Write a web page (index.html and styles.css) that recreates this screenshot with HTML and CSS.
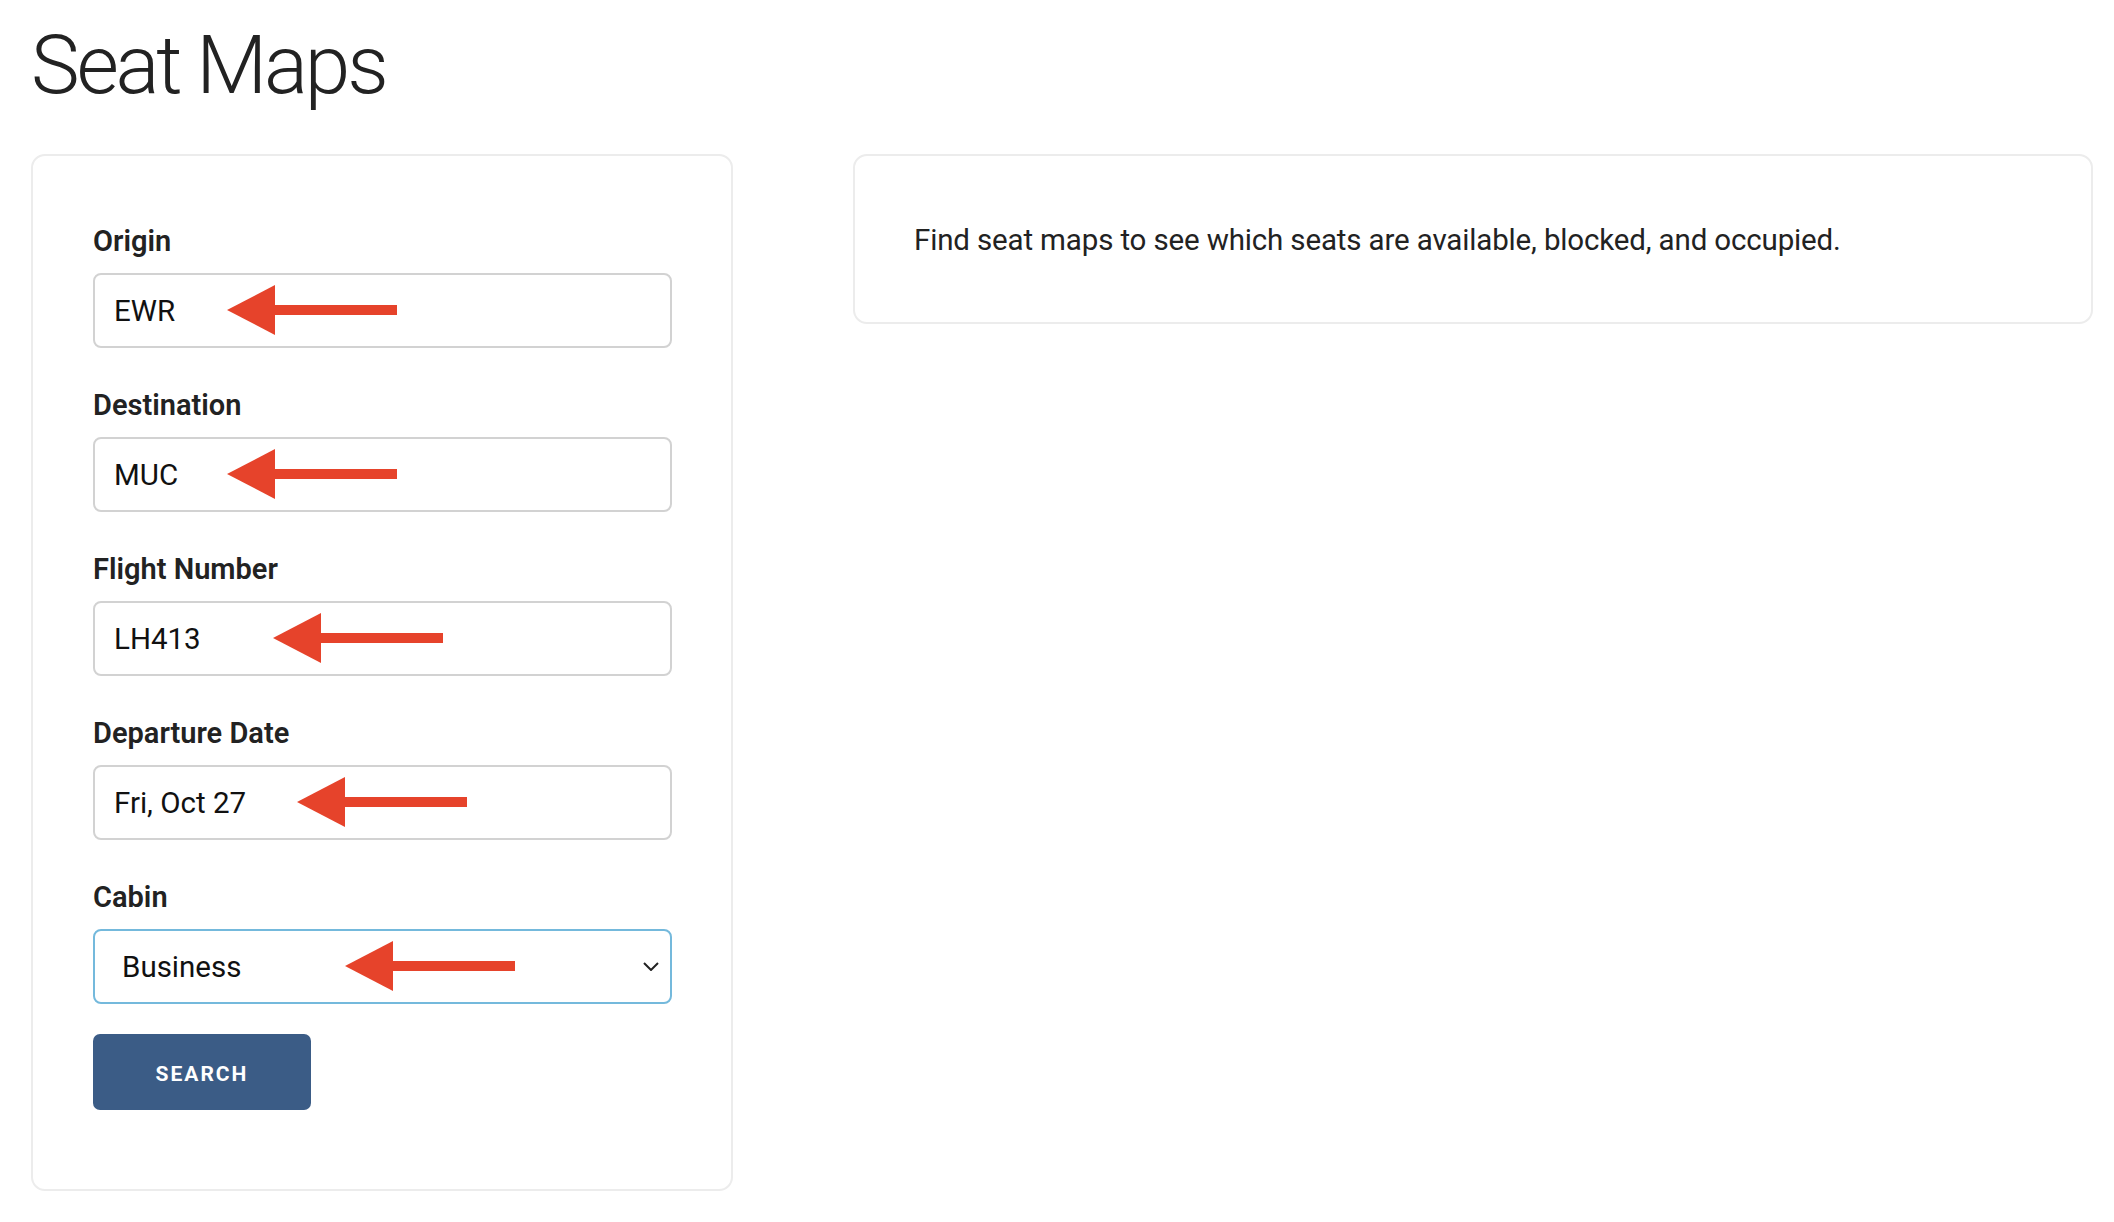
FILE: index.html
```html
<!DOCTYPE html>
<html>
<head>
    <meta charset="utf-8">
    <title>Seat Maps</title>
    <link rel="stylesheet" href="styles.css">
</head>
<body>
    <div class="page">
        <h1 class="page-title">Seat Maps</h1>
        <div class="layout">
            <form class="card search-card">
                <div class="field">
                    <label class="field-label" for="origin">Origin</label>
                    <div class="field-box">
                        <input class="field-input" id="origin" type="text" value="EWR">
                        <svg class="arrow" style="left: 134px" viewBox="0 0 170 50"><polygon points="0,25 48,0 48,50"/><rect x="44" y="20" width="126" height="10"/></svg>
                    </div>
                </div>
                <div class="field">
                    <label class="field-label" for="destination">Destination</label>
                    <div class="field-box">
                        <input class="field-input" id="destination" type="text" value="MUC">
                        <svg class="arrow" style="left: 134px" viewBox="0 0 170 50"><polygon points="0,25 48,0 48,50"/><rect x="44" y="20" width="126" height="10"/></svg>
                    </div>
                </div>
                <div class="field">
                    <label class="field-label" for="flight">Flight Number</label>
                    <div class="field-box">
                        <input class="field-input" id="flight" type="text" value="LH413">
                        <svg class="arrow" style="left: 180px" viewBox="0 0 170 50"><polygon points="0,25 48,0 48,50"/><rect x="44" y="20" width="126" height="10"/></svg>
                    </div>
                </div>
                <div class="field">
                    <label class="field-label" for="date">Departure Date</label>
                    <div class="field-box">
                        <input class="field-input" id="date" type="text" value="Fri, Oct 27">
                        <svg class="arrow" style="left: 204px" viewBox="0 0 170 50"><polygon points="0,25 48,0 48,50"/><rect x="44" y="20" width="126" height="10"/></svg>
                    </div>
                </div>
                <div class="field field-last">
                    <label class="field-label" for="cabin">Cabin</label>
                    <div class="field-box">
                        <select class="field-input field-select" id="cabin">
                            <option>Economy</option>
                            <option>Premium Economy</option>
                            <option selected>Business</option>
                            <option>First</option>
                        </select>
                        <svg class="chevron" viewBox="0 0 16 9"><polyline points="1,1 8,8 15,1"/></svg>
                        <svg class="arrow" style="left: 252px" viewBox="0 0 170 50"><polygon points="0,25 48,0 48,50"/><rect x="44" y="20" width="126" height="10"/></svg>
                    </div>
                </div>
                <button class="search-button" type="button">Search</button>
            </form>

            <div class="card info-card">
                <p class="info-text">Find seat maps to see which seats are available, blocked, and occupied.</p>
            </div>
        </div>
    </div>
</body>
</html>
```

FILE: styles.css
```css
body {
    margin: 0;
    background-color: #fff;
    font-family: Roboto, "Liberation Sans", sans-serif;
    color: #222;
}

.page {
    padding: 24px 21px 0 31px;
}

.page-title {
    margin: 0 0 48px 0;
    font-size: 82px;
    line-height: 82px;
    font-weight: 300;
    letter-spacing: -3.2px;
    color: #222;
}

.layout {
    display: grid;
    grid-template-columns: 702px 1fr;
    column-gap: 120px;
    align-items: start;
}

.card {
    border: 2px solid #ececec;
    border-radius: 14px;
    background-color: #fff;
}

.search-card {
    padding: 68px 59px 79px 60px;
}

.field {
    margin-bottom: 40px;
}

.field-last {
    margin-bottom: 30px;
}

.field-label {
    display: block;
    margin-bottom: 14px;
    font-size: 29px;
    line-height: 35px;
    font-weight: 600;
    color: #222;
}

.field-box {
    position: relative;
}

.field-input {
    display: block;
    box-sizing: border-box;
    width: 100%;
    height: 75px;
    padding: 0 19px;
    border: 2px solid #d2d2d2;
    border-radius: 8px;
    background-color: #fff;
    font-family: Roboto, "Liberation Sans", sans-serif;
    font-size: 29.5px;
    color: #111;
    outline: none;
}

.field-select {
    -webkit-appearance: none;
    appearance: none;
    padding-left: 27px;
    border-color: #74b9dc;
}

.chevron {
    position: absolute;
    right: 13px;
    top: 33px;
    width: 16px;
    height: 9px;
    fill: none;
    stroke: #222;
    stroke-width: 2;
    pointer-events: none;
}

.arrow {
    position: absolute;
    top: 12px;
    width: 170px;
    height: 50px;
    fill: #e6432b;
    pointer-events: none;
}

.search-button {
    display: block;
    width: 218px;
    height: 76px;
    padding: 4px 0 0 0;
    border: none;
    border-radius: 7px;
    background-color: #3b5c86;
    color: #fff;
    font-family: Roboto, "Liberation Sans", sans-serif;
    font-size: 21px;
    font-weight: 700;
    letter-spacing: 2px;
    text-transform: uppercase;
    cursor: pointer;
}

.info-card {
    padding: 67px 40px 64px 59px;
}

.info-text {
    margin: 0;
    font-size: 29.5px;
    line-height: 35px;
    letter-spacing: -0.15px;
    color: #222;
}
```
